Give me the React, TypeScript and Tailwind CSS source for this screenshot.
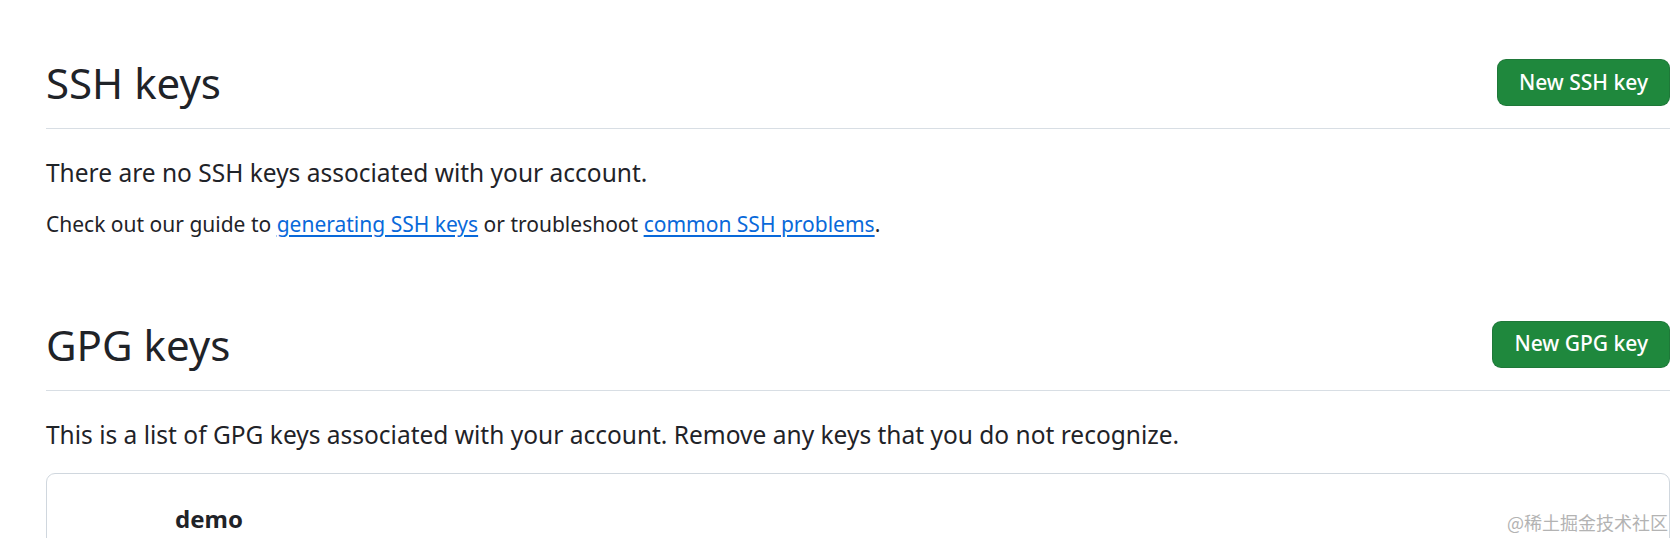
import React from "react";

export default function App() {
  return (
    <div className="relative w-[1675px] h-[538px] overflow-hidden bg-white text-[#1f2328] font-['Noto_Sans',sans-serif]">
      <div className="pl-[46px] pr-[5px] pt-[49px]">
        <section>
          <div className="flex items-center justify-between border-b border-[#d8dee4] pb-[12px]">
            <h2 className="text-[42px] leading-[67px] font-normal">SSH keys</h2>
            <button className="h-[47px] px-[21px] rounded-[9px] bg-[#1f883d] text-white text-[21px] font-medium border border-[rgba(31,35,40,0.15)]">
              New SSH key
            </button>
          </div>
          <p className="mt-[26px] text-[24.5px] leading-[36px]">
            There are no SSH keys associated with your account.
          </p>
          <p className="mt-[18px] text-[21px] leading-[31.5px]">
            Check out our guide to{" "}
            <a className="text-[#0969da] underline underline-offset-[3px]" href="#">
              generating SSH keys
            </a>{" "}
            or troubleshoot{" "}
            <a className="text-[#0969da] underline underline-offset-[3px]" href="#">
              common SSH problems
            </a>
            .
          </p>
        </section>

        <section className="mt-[70px]">
          <div className="flex items-center justify-between border-b border-[#d8dee4] pb-[12px]">
            <h2 className="text-[42px] leading-[67px] font-normal">GPG keys</h2>
            <button className="h-[47px] px-[21px] rounded-[9px] bg-[#1f883d] text-white text-[21px] font-medium border border-[rgba(31,35,40,0.15)]">
              New GPG key
            </button>
          </div>
          <p className="mt-[26px] text-[24.5px] leading-[36px]">
            This is a list of GPG keys associated with your account. Remove any keys that you do not recognize.
          </p>
          <div className="mt-[20px] h-[200px] rounded-[9px] border border-[#d0d7de] pl-[128px] pt-[27px]">
            <strong className="block text-[24px] leading-[36px] font-bold">demo</strong>
          </div>
        </section>
      </div>

      <div className="absolute right-[7px] top-[513px] text-[18px] leading-[18px] text-[#b3b3b3] font-['Noto_Sans_CJK_SC',sans-serif]">
        @稀土掘金技术社区
      </div>
    </div>
  );
}
